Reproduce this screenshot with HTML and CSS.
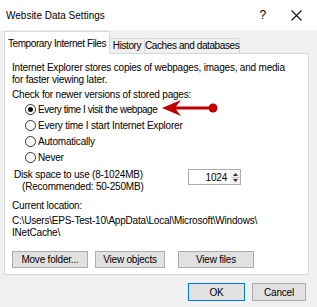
FILE: index.html
```html
<!DOCTYPE html>
<html lang="en">
<head>
  <meta charset="UTF-8" />
  <title>Website Data Settings</title>
  <link rel="stylesheet" href="styles.css">
</head>
<body>
  <div class="titlebar">
    <span class="title">Website Data Settings</span>
    <span class="help">?</span>
    <svg class="close" width="11" height="11" viewBox="0 0 11 11">
      <path d="M0.5 0.5 L10.5 10.5 M10.5 0.5 L0.5 10.5" stroke="#111" stroke-width="1.1" fill="none"/>
    </svg>
  </div>

  <div class="dialog">
    <div class="tabs">
      <div class="tab active">Temporary Internet Files</div>
      <div class="tab tab-history">History</div>
      <div class="tab tab-caches">Caches and databases</div>
    </div>

    <div class="panel">
      <p class="intro">Internet Explorer stores copies of webpages, images, and media<br>for faster viewing later.</p>
      <p class="check">Check for newer versions of stored pages:</p>

      <div class="radios">
        <div class="radio-row">
          <span class="radio checked"></span>
          <span class="label-tight">Every time I visit the webpage</span>
          <svg class="arrow" width="60" height="20" viewBox="0 0 60 20">
            <path d="M1 10 L20 2 L15 8.5 L52 8.5 L52 11.5 L15 11.5 L20 18 Z" fill="#c00000"/>
            <circle cx="52" cy="10" r="4.5" fill="#c00000"/>
          </svg>
        </div>
        <div class="radio-row"><span class="radio"></span><span>Every time I start Internet Explorer</span></div>
        <div class="radio-row"><span class="radio"></span><span>Automatically</span></div>
        <div class="radio-row"><span class="radio"></span><span>Never</span></div>
      </div>

      <div class="disk-row">
        <div class="disk-label">
          <div>Disk space to use (8-1024MB)</div>
          <div class="recommended">(Recommended: 50-250MB)</div>
        </div>
        <div class="spinner">
          <span class="spin-value">1024</span>
          <span class="spin-arrows">
            <svg width="9" height="13" viewBox="0 0 9 13">
              <path d="M4.5 2 L7 5 L2 5 Z M2 8 L7 8 L4.5 11 Z" fill="#333"/>
              <path d="M0.5 6.5 L8.5 6.5" stroke="#c8c8c8" stroke-width="1"/>
            </svg>
          </span>
        </div>
      </div>

      <p class="location-label">Current location:</p>
      <p class="location">C:\Users\EPS-Test-10\AppData\Local\Microsoft\Windows\<br>INetCache\</p>

      <div class="panel-buttons">
        <button class="btn btn-move">Move folder...</button>
        <button class="btn btn-objects">View objects</button>
        <button class="btn btn-files">View files</button>
      </div>
    </div>

    <div class="footer">
      <button class="btn btn-ok">OK</button>
      <button class="btn btn-cancel">Cancel</button>
    </div>
  </div>
</body>
</html>
```

FILE: styles.css
```css
body {
  margin: 0;
  width: 317px;
  height: 307px;
  overflow: hidden;
  background-color: #f0f0f0;
  color: #000;
  font-family: "Liberation Sans", Arial, sans-serif;
  font-size: 10px;
  letter-spacing: -0.2px;
  white-space: nowrap;
}
p {
  margin: 0;
}
.titlebar {
  height: 30px;
  background-color: #fff;
  display: flex;
  align-items: center;
  padding-left: 6px;
}
.title {
  font-size: 10px;
  letter-spacing: 0;
  flex: 1;
}
.help {
  font-size: 12px;
  margin-right: 25px;
}
.close {
  margin-right: 15px;
}
.dialog {
  padding: 1px 8px 0 4px;
}
.tabs {
  display: flex;
  align-items: flex-end;
  height: 22px;
  position: relative;
  z-index: 1;
}
.tab {
  border: 1px solid #d9d9d9;
  border-bottom: none;
  line-height: 14px;
  height: 15px;
  padding: 0;
  text-align: center;
  letter-spacing: -0.4px;
  background-color: #f0f0f0;
  box-sizing: border-box;
}
.tab-history {
  width: 35px;
  border-left: none;
}
.tab-caches {
  width: 95px;
  border-left: none;
}
.tab.active {
  height: 23px;
  width: 106px;
  background-color: #fff;
  line-height: 24px;
  margin-bottom: -1px;
}
.panel {
  background-color: #fff;
  border: 1px solid #d9d9d9;
  height: 222px;
  box-sizing: border-box;
  padding: 8px 0 0 7px;
}
.intro {
  line-height: 12px;
}
.check {
  line-height: 12px;
  margin-top: 3px;
}
.radios {
  padding-left: 13px;
}
.radio-row {
  display: flex;
  align-items: center;
  height: 16px;
  position: relative;
}
.radio {
  width: 11px;
  height: 11px;
  border: 1px solid #333;
  border-radius: 50%;
  box-sizing: border-box;
  margin-right: 2px;
  display: flex;
  align-items: center;
  justify-content: center;
}
.radio.checked::after {
  content: "";
  width: 5px;
  height: 5px;
  border-radius: 50%;
  background-color: #111;
}
.label-tight {
  letter-spacing: -0.45px;
}
.arrow {
  position: absolute;
  left: 136px;
  top: -3px;
}
.disk-row {
  display: flex;
  align-items: flex-start;
  margin-top: 4px;
  padding-left: 2px;
}
.disk-label {
  line-height: 12px;
  width: 174px;
}
.recommended {
  padding-left: 8px;
}
.spinner {
  width: 53px;
  height: 16px;
  border: 1px solid #adadad;
  box-sizing: border-box;
  display: flex;
  align-items: center;
  background-color: #fff;
}
.spin-value {
  flex: 1;
  text-align: right;
  padding-right: 3px;
}
.spin-arrows {
  width: 10px;
  height: 14px;
  background-color: #f0f0f0;
  display: flex;
  align-items: center;
  justify-content: center;
}
.location-label {
  line-height: 12px;
  margin-top: 7px;
}
.location {
  line-height: 12px;
  margin-top: 3px;
}
.panel-buttons {
  display: flex;
  margin-top: 12px;
}
.btn {
  font-family: inherit;
  font-size: 10px;
  letter-spacing: -0.2px;
  color: #000;
  background-color: #e1e1e1;
  border: 1px solid #adadad;
  height: 17px;
  padding: 0;
  box-sizing: border-box;
}
.btn-move {
  width: 76px;
}
.btn-objects {
  width: 70px;
  margin-left: 7px;
}
.btn-files {
  width: 76px;
  margin-left: 13px;
}
.footer {
  display: flex;
  justify-content: flex-end;
  margin-top: 8px;
  padding-right: 3px;
}
.btn-ok {
  width: 57px;
  height: 18px;
  border-color: #0078d7;
}
.btn-cancel {
  width: 54px;
  height: 18px;
  margin-left: 7px;
}
```
